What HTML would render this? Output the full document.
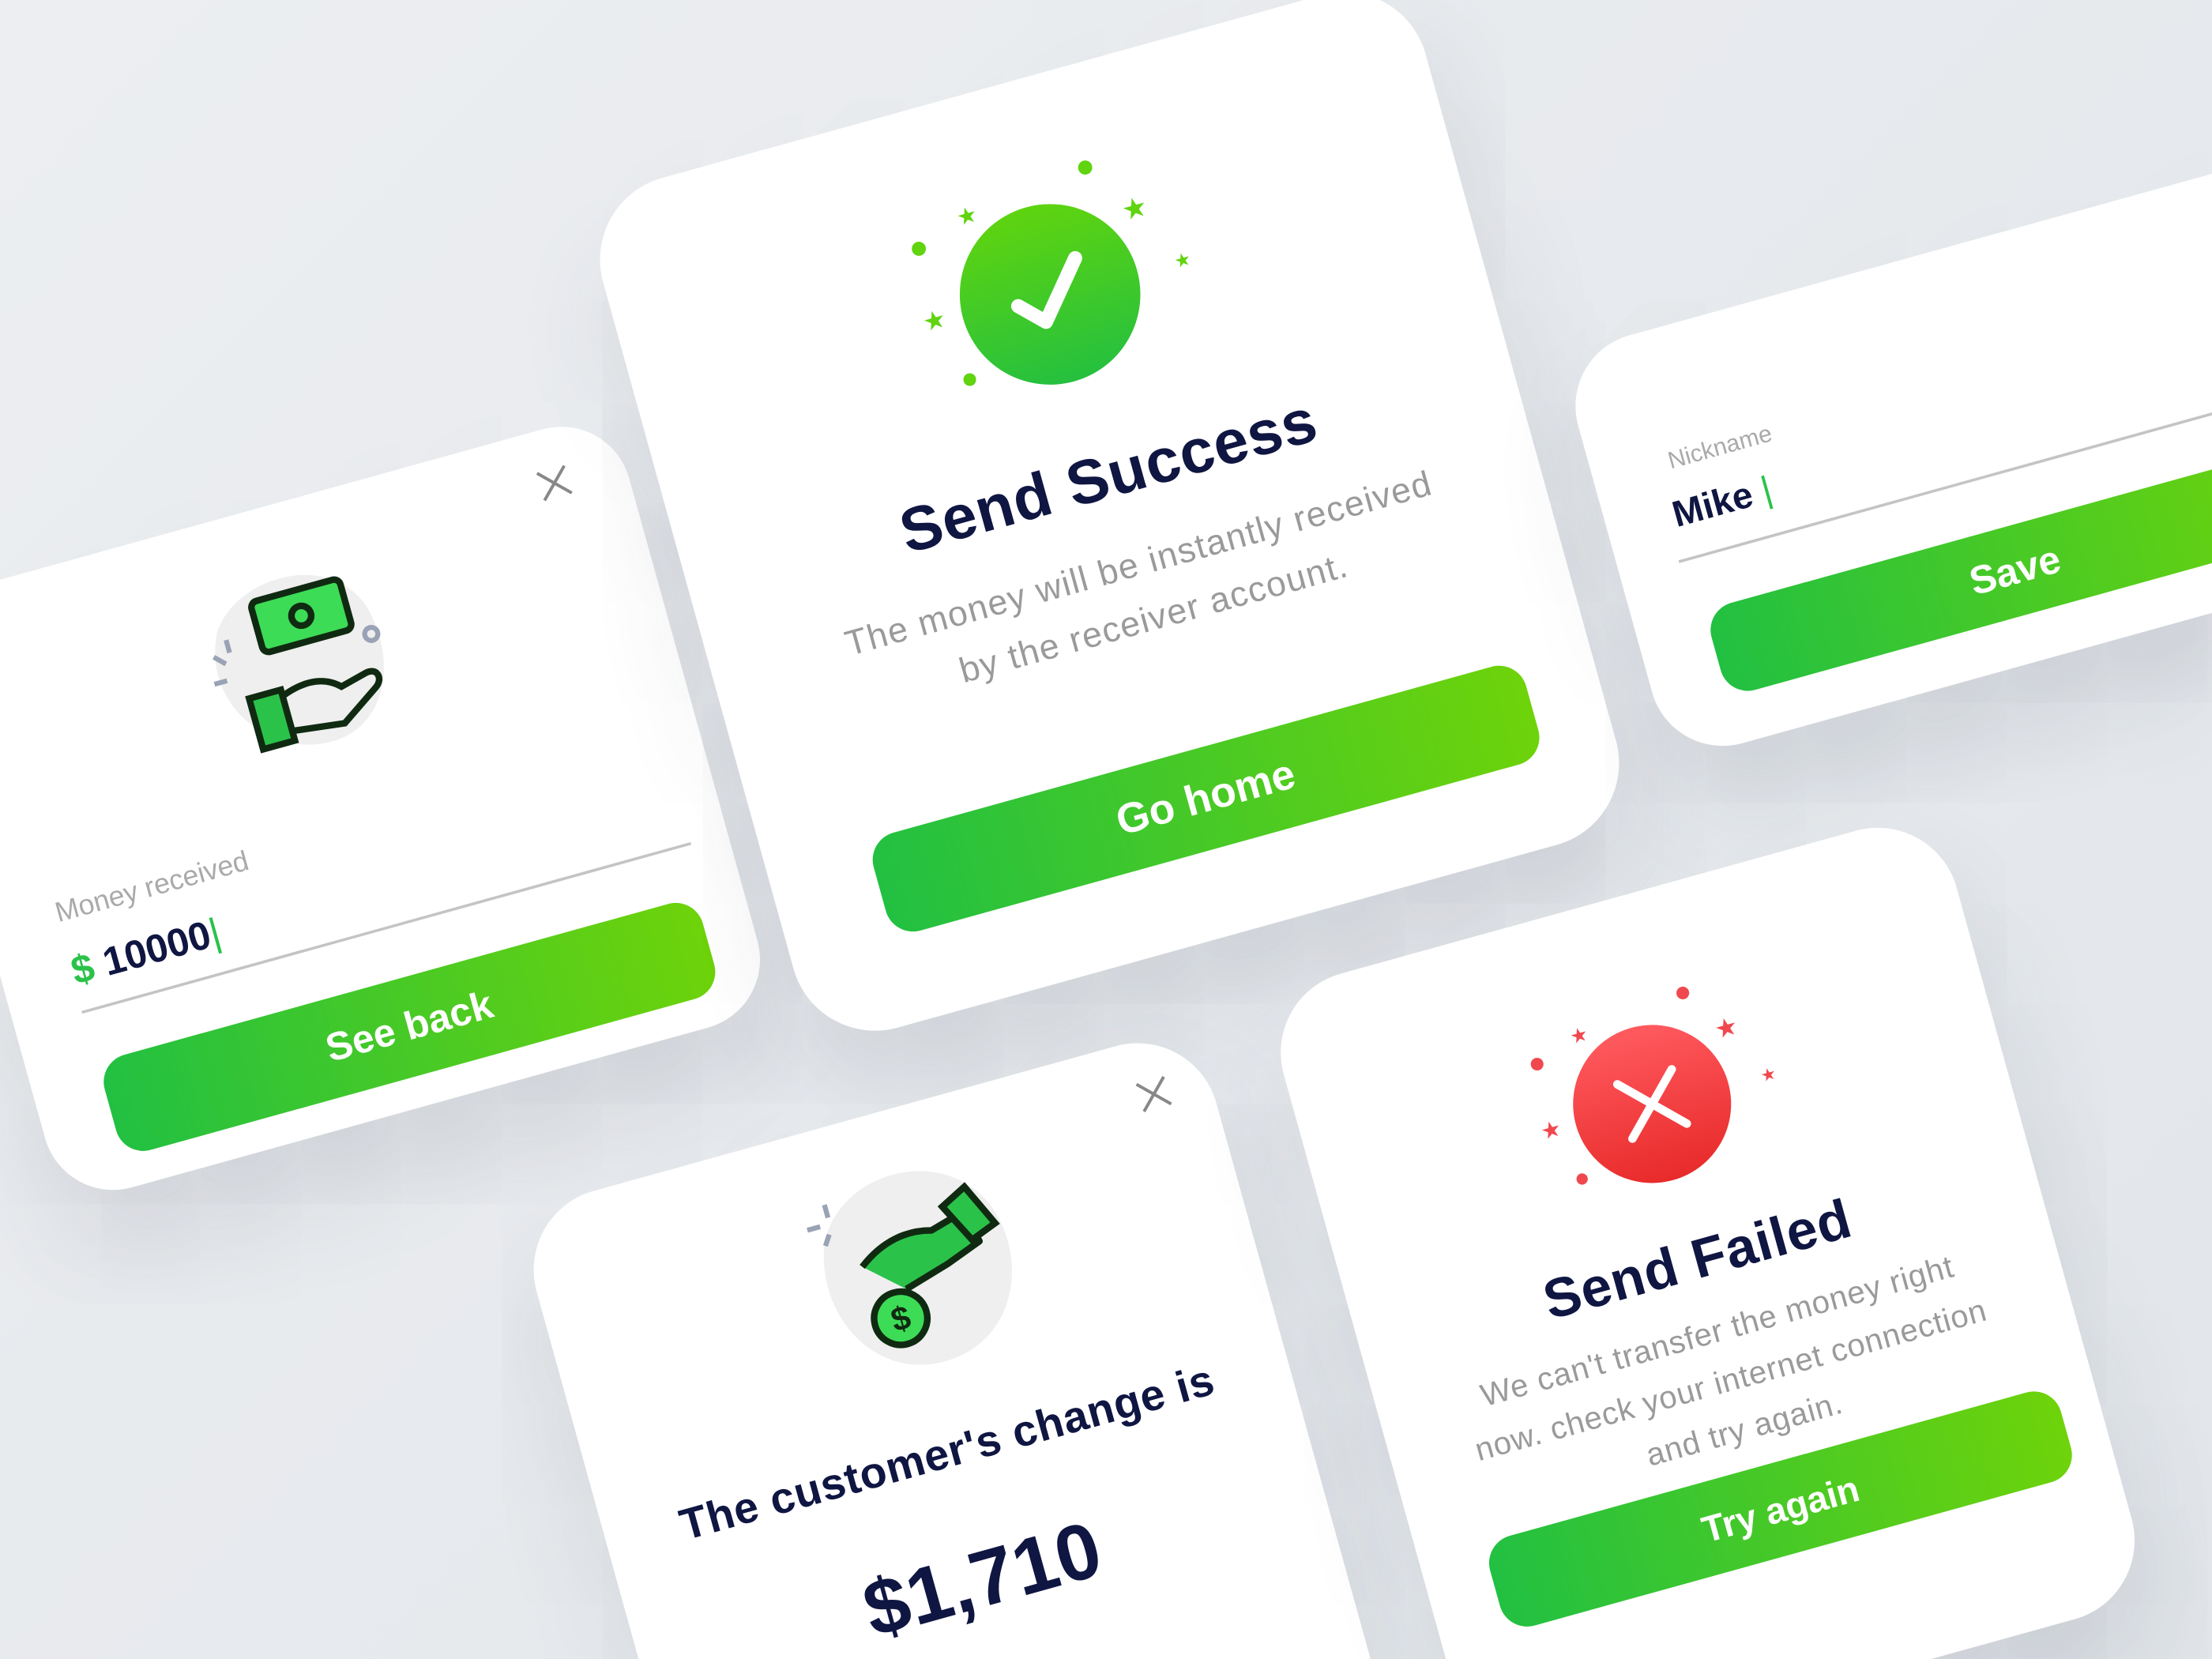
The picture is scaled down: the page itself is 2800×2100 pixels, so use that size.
<!DOCTYPE html>
<html><head><meta charset="utf-8"><style>
html,body{margin:0;padding:0;width:2800px;height:2100px;overflow:hidden}
body{background:#e6e9ed;font-family:"Liberation Sans",sans-serif}
#w{position:relative;width:2800px;height:2100px;overflow:hidden}
#s{position:absolute;left:0;top:0;width:1568px;height:1176px;transform:scale(1.785714);transform-origin:0 0;background:linear-gradient(135deg,#eceef1,#e2e6ea);overflow:hidden}
.c{position:absolute;background:#fff;border-radius:56px;transform:rotate(-15.5deg);box-shadow:0 40px 90px rgba(60,70,90,0.16)}
.a{position:absolute}
.t{position:absolute;left:0;width:100%;text-align:center;white-space:nowrap}
.btn{position:absolute;border-radius:20px;background:linear-gradient(90deg,#22c042,#6ed30a);color:#fff;font-weight:bold;text-align:center}
.navy{color:#0f1642;font-weight:bold}
.gray{color:#9a9a9a}
</style></head><body><div id="w"><div id="s">

<!-- left card -->
<div class="c" style="left:-23px;top:353px;width:524px;height:440px;border-radius:50px">
  <svg class="a" style="left:460px;top:27px" width="24" height="24" viewBox="0 0 24 24"><path d="M2 2L22 22M22 2L2 22" stroke="#888" stroke-width="2.2"/></svg>
  <svg class="a" style="left:190px;top:42px" width="140" height="140" viewBox="0 0 120 120">
    <path d="M20 30 C40 0 100 0 112 40 C122 80 100 118 62 112 C30 108 0 70 20 30Z" fill="#efefef"/>
    <rect x="44" y="18" width="56" height="32" rx="4" fill="#3ddc56" stroke="#102a12" stroke-width="4"/>
    <circle cx="72" cy="34" r="6" fill="#3ddc56" stroke="#102a12" stroke-width="4"/>
    <path d="M28 74 L48 74 L48 106 L28 106Z" fill="#2bc24a" stroke="#102a12" stroke-width="4"/>
    <path d="M48 78 C64 72 76 74 84 82 L100 78 C108 76 110 84 104 88 L80 104 L48 100" fill="none" stroke="#102a12" stroke-width="4"/>
    <path d="M14 44 L20 50 M10 60 L18 60 M24 36 L24 44" stroke="#9aa3b5" stroke-width="3"/>
    <circle cx="110" cy="56" r="4" fill="none" stroke="#9aa3b5" stroke-width="3"/>
  </svg>
  <div class="a gray" style="left:50px;top:228px;font-size:20px;color:#aaa">Money received</div>
  <div class="a navy" style="left:50px;top:266px;font-size:28px;font-weight:600"><span style="color:#2bc24a">$</span> 10000<span style="color:#2bc24a;font-weight:normal">|</span></div>
  <div class="a" style="left:49px;top:310px;width:448px;height:1.5px;background:#c4c4c4"></div>
  <div class="btn" style="left:50px;top:348px;width:440px;height:70px;line-height:70px;font-size:28px">See back</div>
</div>

<!-- center card -->
<div class="c" style="left:484px;top:50px;width:605px;height:625px;border-radius:60px">
  <svg class="a" style="left:193px;top:53px" width="220" height="200" viewBox="-110 -100 220 200">
    <defs><linearGradient id="g1" x1="0" y1="0" x2="0" y2="1"><stop offset="0" stop-color="#5fd40f"/><stop offset="1" stop-color="#25c03f"/></linearGradient></defs>
    <circle cx="0" cy="0" r="64" fill="url(#g1)"/>
    <path d="M-24 2 L-8 18 L24 -20" fill="none" stroke="#fff" stroke-width="10" stroke-linecap="round" stroke-linejoin="round"/>
    <g fill="#5fd40f"><circle cx="48" cy="-80" r="5"/><circle cx="-81" cy="-56" r="5"/><circle cx="-71" cy="43" r="4.5"/>
    <text x="-42" y="-64" font-size="16" text-anchor="middle">★</text><text x="74" y="-36" font-size="20" text-anchor="middle">★</text><text x="97" y="6" font-size="13" text-anchor="middle">★</text><text x="-84" y="2" font-size="18" text-anchor="middle">★</text></g>
  </svg>
  <div class="t navy" style="top:264px;font-size:44px;letter-spacing:0.5px;padding-left:12px;box-sizing:border-box">Send Success</div>
  <div class="t gray" style="top:334px;font-size:25px;line-height:40px;letter-spacing:0.8px;padding-left:20px;box-sizing:border-box">The money will be instantly received<br>by the receiver account.</div>
  <div class="btn" style="left:74px;top:491px;width:480px;height:72px;line-height:72px;font-size:30px">Go home</div>
</div>

<!-- right card -->
<div class="c" style="left:1134px;top:166px;width:600px;height:300px;border-radius:52px">
  <div class="a" style="left:55px;top:84px;font-size:17px;color:#aaa">Nickname</div>
  <div class="a navy" style="left:48px;top:116px;font-size:26px;font-weight:600">Mike <span style="color:#2bc24a;font-weight:normal">|</span></div>
  <div class="a" style="left:43px;top:163px;width:560px;height:1.5px;background:#c4c4c4"></div>
  <div class="btn" style="left:51px;top:202px;width:440px;height:64px;line-height:64px;font-size:28px">Save</div>
  <div class="a" style="left:470px;top:202px;width:140px;height:64px;background:#6ed30a"></div>
</div>

<!-- bottom-left card -->
<div class="c" style="left:436px;top:782px;width:500px;height:600px;border-radius:58px">
  <svg class="a" style="left:447px;top:28px" width="24" height="24" viewBox="0 0 24 24"><path d="M2 2L22 22M22 2L2 22" stroke="#888" stroke-width="2.2"/></svg>
  <svg class="a" style="left:180px;top:32px" width="165" height="165" viewBox="0 0 140 140">
    <path d="M22 40 C40 4 100 0 122 40 C140 76 120 130 70 128 C28 126 6 80 22 40Z" fill="#efefef"/>
    <path d="M40 60 C56 48 72 46 86 50 L108 44 L112 64 L90 72 L62 80" fill="#2bc24a" stroke="#102a12" stroke-width="4" stroke-linejoin="round"/>
    <path d="M96 38 L112 30 L124 56 L108 62Z" fill="#2bc24a" stroke="#102a12" stroke-width="4"/>
    <circle cx="54" cy="96" r="16" fill="#3ddc56" stroke="#102a12" stroke-width="4"/>
    <text x="54" y="103" font-size="20" font-weight="bold" text-anchor="middle" fill="#102a12">$</text>
    <path d="M14 30 L22 30 M28 18 L28 26 M26 36 L22 42" stroke="#9aa3b5" stroke-width="3"/>
  </svg>
  <div class="t navy" style="top:228px;font-size:31px;letter-spacing:0.5px">The customer's change is</div>
  <div class="t navy" style="top:306px;font-size:56px;font-weight:800">$1,710</div>
</div>

<!-- bottom-right card -->
<div class="c" style="left:963px;top:629px;width:495px;height:580px;border-radius:58px">
  <svg class="a" style="left:136px;top:48px" width="220" height="200" viewBox="-110 -100 220 200">
    <defs><linearGradient id="g2" x1="0" y1="0" x2="0" y2="1"><stop offset="0" stop-color="#ff5a5f"/><stop offset="1" stop-color="#e82a2a"/></linearGradient></defs>
    <circle cx="0" cy="0" r="56" fill="url(#g2)"/>
    <path d="M-20 -20 L20 20 M20 -20 L-20 20" stroke="#fff" stroke-width="6" stroke-linecap="round"/>
    <g fill="#f0484e"><circle cx="42" cy="-70" r="4.5"/><circle cx="-71" cy="-49" r="4.5"/><circle cx="-62" cy="38" r="4"/>
    <text x="-37" y="-56" font-size="14" text-anchor="middle">★</text><text x="65" y="-32" font-size="18" text-anchor="middle">★</text><text x="85" y="6" font-size="12" text-anchor="middle">★</text><text x="-74" y="4" font-size="16" text-anchor="middle">★</text></g>
  </svg>
  <div class="t navy" style="top:242px;font-size:39px;letter-spacing:0.5px">Send Failed</div>
  <div class="t gray" style="top:298px;font-size:22.5px;line-height:36px;letter-spacing:0.5px">We can't transfer the money right<br>now. check your internet connection<br>and try again.</div>
  <div class="btn" style="left:47px;top:416px;width:420px;height:66px;line-height:66px;font-size:26px">Try again</div>
</div>

</div></div></body></html>
